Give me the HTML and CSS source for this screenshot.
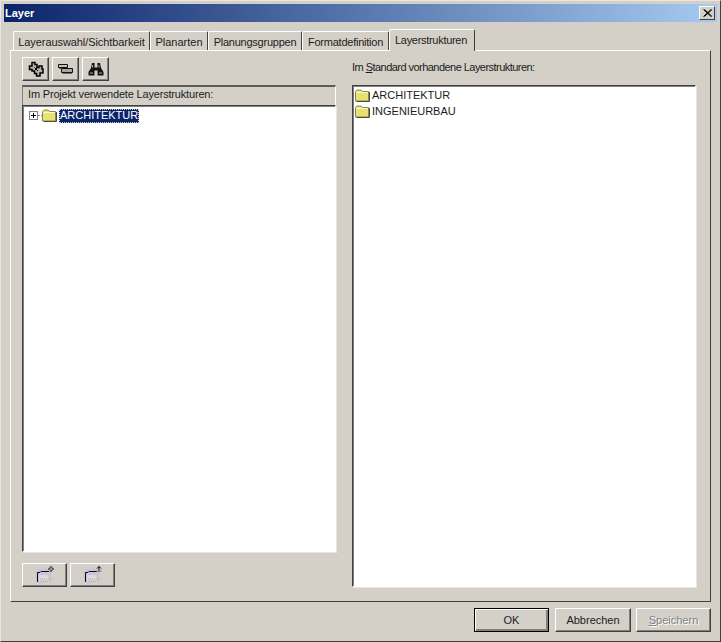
FILE: index.html
```html
<!DOCTYPE html>
<html lang="de">
<head>
<meta charset="utf-8">
<title>Layer</title>
<link rel="stylesheet" href="styles.css">
</head>
<body>
<svg class="defs" width="0" height="0" aria-hidden="true">
  <defs>
    <symbol id="folder" viewBox="0 0 15 13">
      <path d="M0.500 12V2.500L2 1H6L7.500 2.500H13.500V12Z" fill="#e8e272" stroke="#85855a"/>
      <path d="M1 3.500H13" stroke="#fffbc0" fill="none"/>
      <path d="M14.500 3V12.500H1.500" fill="none" stroke="#4e4e30"/>
    </symbol>
    <symbol id="newfolder-a" viewBox="0 0 22 20">
      <path d="M2 6L5 4H13L17 7V15L10 18H4L2 16Z" fill="#c6c4d6"/>
      <path d="M5 10H14L16 16H5Z" fill="#dddbd6"/>
      <path d="M3.500 17V7.500H6L7 6.500H15" fill="none" stroke="#06062a"/>
      <path d="M17 1V7M14 4H20" stroke="#000"/>
      <path d="M15 2L19 6M19 2L15 6" stroke="#8a8a8a"/>
      <path d="M6 14H19M7 16H17" stroke="#aaa8a4" stroke-dasharray="1 1"/>
    </symbol>
    <symbol id="newfolder-b" viewBox="0 0 22 20">
      <path d="M2 6L5 4H13L17 7V15L10 18H4L2 16Z" fill="#c6c4d6"/>
      <path d="M5 10H14L16 16H5Z" fill="#dddbd6"/>
      <path d="M3.500 17V7.500H6L7 6.500H15" fill="none" stroke="#06062a"/>
      <path d="M17 1.500V7M15 3.500L17 1.500L19 3.500" fill="none" stroke="#000"/>
      <path d="M14 6L20 6" stroke="#8a8a8a"/>
      <path d="M6 14H19M7 16H17" stroke="#aaa8a4" stroke-dasharray="1 1"/>
    </symbol>
  </defs>
</svg>
<div class="window">
  <header class="titlebar">
    <span class="title">Layer</span>
    <span class="close">
      <svg width="9" height="8" viewBox="0 0 9 8"><path d="M0.500 0.500L8 7.500M1.500 0.500L9 7.500M8 0.500L0.500 7.500M9 0.500L1.500 7.500" stroke="#000" fill="none"/></svg>
    </span>
  </header>
  <div class="body">
    <nav class="tabs">
      <span class="tab tab-a">Layerauswahl/Sichtbarkeit</span>
      <span class="tab tab-b">Planarten</span>
      <span class="tab tab-c">Planungsgruppen</span>
      <span class="tab tab-d">Formatdefinition</span>
      <span class="tab tab-active">Layerstrukturen</span>
    </nav>
    <section class="panel">
      <div class="col-left">
        <div class="toolbar">
          <span class="btn btn-tool">
            <svg width="16" height="16" viewBox="0 0 16 16"><path d="M4 1.500H7V3.500H9V6.500H11V5H14V8H15V12H12V15H8.500V12.500H6.500V10H4V8.500H1.500V5H4Z" fill="#b4b1a8" stroke="#000" stroke-width="1.500"/><path d="M6.500 6.500L10 10M10 6L7 9" stroke="#000"/></svg>
          </span>
          <span class="btn btn-tool">
            <svg width="15" height="10" viewBox="0 0 15 10"><path d="M0.500 0.500H9.500V3.500H0.500Z" fill="#c8c6a8" stroke="#111"/><path d="M3.500 4.500H14.500V8.500H3.500Z" fill="#a8a698" stroke="#111"/><path d="M1 4.500H3M4.500 9.500H14" stroke="#666"/></svg>
          </span>
          <span class="btn btn-tool">
            <svg width="16" height="13" viewBox="0 0 16 13"><path d="M4 0H6.500V4.500H9.500V0H12L13 5L15.500 9V12.500H9.500V7.500H6.500V12.500H0.500V9L3 5Z" fill="#111"/><path d="M2 10H5M11 10H14M4.500 2V4.500M11 2V4.500" stroke="#aaa"/></svg>
          </span>
        </div>
        <div class="tree-head">Im Projekt verwendete Layerstrukturen:</div>
        <div class="tree sunken">
          <div class="tree-row">
            <span class="expander">
              <svg width="9" height="9" viewBox="0 0 9 9"><rect x=".5" y=".5" width="8" height="8" fill="#fff" stroke="#808080"/><path d="M2 4.500H7M4.500 2V7" stroke="#000"/></svg>
            </span>
            <span class="dots"></span>
            <svg class="icon-folder" width="15" height="13"><use href="#folder"/></svg>
            <span class="selected">ARCHITEKTUR</span>
          </div>
        </div>
        <div class="bottom-tools">
          <span class="btn btn-wide"><svg width="22" height="20"><use href="#newfolder-a"/></svg></span>
          <span class="btn btn-wide"><svg width="22" height="20"><use href="#newfolder-b"/></svg></span>
        </div>
      </div>
      <div class="col-right">
        <div class="list-label">Im <u>S</u>tandard vorhandene Layerstrukturen:</div>
        <div class="list sunken">
          <div class="list-row"><svg width="15" height="13"><use href="#folder"/></svg><span>ARCHITEKTUR</span></div>
          <div class="list-row"><svg width="15" height="13"><use href="#folder"/></svg><span>INGENIEURBAU</span></div>
        </div>
      </div>
    </section>
    <footer class="actions">
      <span class="btn btn-action btn-default">OK</span>
      <span class="btn btn-action">Abbrechen</span>
      <span class="btn btn-action btn-disabled"><span><u>S</u>peichern</span></span>
    </footer>
  </div>
</div>
</body>
</html>
```
FILE: styles.css
```css
* { box-sizing: border-box; }
html, body { margin: 0; padding: 0; }
body {
  width: 721px;
  height: 642px;
  overflow: hidden;
  background: #d4d0c8;
  font-family: "Liberation Sans", Arial, sans-serif;
  font-size: 11px;
  color: #1c1c1c;
}
.defs { position: absolute; }
.window {
  width: 721px;
  height: 642px;
  display: flex;
  flex-direction: column;
  background: #d4d0c8;
  border: 1px solid;
  border-color: #e8e6e0 #404040 #404040 #e8e6e0;
  padding: 3px;
}
.titlebar {
  height: 18px;
  flex: none;
  display: flex;
  align-items: center;
  justify-content: space-between;
  padding: 0 2px 0 1px;
  background: linear-gradient(90deg, #0a246a, #a6caf0);
  color: #fff;
}
.title { font-weight: bold; font-size: 11px; }
.close {
  width: 16px;
  height: 14px;
  display: flex;
  align-items: center;
  justify-content: center;
  background: #d4d0c8;
  border: 1px solid;
  border-color: #fff #404040 #404040 #fff;
}
.body {
  flex: 1;
  display: flex;
  flex-direction: column;
  padding: 7px 6px 6px 6px;
  min-height: 0;
}
.tabs {
  height: 21px;
  flex: none;
  display: flex;
  align-items: flex-end;
  padding-left: 3px;
  position: relative;
  z-index: 1;
}
.tab {
  height: 19px;
  display: flex;
  align-items: center;
  justify-content: center;
  border: 1px solid #fff;
  border-bottom: 0;
  border-right-color: #404040;
  border-radius: 2px 2px 0 0;
  white-space: nowrap;
  padding-top: 1px;
  letter-spacing: -0.24px;
}
.tab-a { width: 137px; letter-spacing: -0.08px; }
.tab-b { width: 58px; letter-spacing: 0; }
.tab-c { width: 94px; }
.tab-d { width: 87px; }
.tab-active {
  width: 86px;
  height: 22px;
  margin-bottom: -1px;
  padding-bottom: 2px;
  padding-right: 2px;
  letter-spacing: -0.3px;
  background: #d4d0c8;
}
.panel {
  flex: 1;
  min-height: 0;
  display: flex;
  padding: 6px 14px 14px 11px;
  gap: 16px;
  border: 1px solid;
  border-color: #fff #404040 #404040 #fff;
}
.col-left {
  width: 314px;
  flex: none;
  display: flex;
  flex-direction: column;
}
.col-right {
  flex: 1;
  min-width: 0;
  display: flex;
  flex-direction: column;
}
.toolbar {
  display: flex;
  gap: 3px;
  height: 24px;
  margin-bottom: 4px;
  flex: none;
}
.btn {
  display: flex;
  align-items: center;
  justify-content: center;
  background: #d4d0c8;
  border: 1px solid;
  border-color: #fff #404040 #404040 #fff;
  box-shadow: inset -1px -1px 0 #808080;
}
.btn-tool { width: 27px; height: 24px; }
.tree-head {
  height: 20px;
  flex: none;
  line-height: 14px;
  padding-left: 5px;
  border-top: 2px solid #5c5c5c;
  border-left: 1px solid #808080;
  border-right: 1px solid #fff;
  letter-spacing: -0.18px;
}
.sunken {
  background: #fff;
  border: 1px solid;
  border-color: #404040 #fff #fff #404040;
  box-shadow: inset 1px 1px 0 #808080, 1px 1px 0 #e8e6e0;
}
.tree {
  flex: 1;
  min-height: 0;
  padding: 2px 0 0 6px;
}
.tree-row {
  display: flex;
  align-items: center;
  height: 15px;
}
.expander { display: flex; width: 9px; height: 9px; }
.dots {
  width: 4px;
  height: 0;
  border-top: 1px dotted #808080;
}
.icon-folder { flex: none; margin-right: 2px; }
.selected {
  height: 14px;
  line-height: 13px;
  padding: 0 1px;
  background: #0a246a;
  color: #fff;
  outline: 1px dotted #d4d0c8;
  outline-offset: -1px;
}
.bottom-tools {
  display: flex;
  gap: 3px;
  height: 24px;
  margin-top: 11px;
  flex: none;
}
.btn-wide { width: 45px; height: 24px; }
.list-label {
  height: 28px;
  flex: none;
  padding-top: 4px;
  line-height: 13px;
  letter-spacing: -0.54px;
}
.list {
  flex: 1;
  min-height: 0;
  padding: 1px 0 0 2px;
}
.list-row {
  display: flex;
  align-items: center;
  gap: 2px;
  height: 16px;
}
.actions {
  flex: none;
  height: 24px;
  margin-top: 6px;
  display: flex;
  justify-content: flex-end;
  gap: 5px;
}
.btn-action { width: 76px; height: 24px; }
.btn-default {
  outline: 1px solid #000;
  outline-offset: -1px;
  width: 75px;
  margin-right: 1px;
  box-shadow: inset 1px 1px 0 #fff, inset -2px -2px 0 #808080;
}
.btn-disabled { width: 75px; color: #808080; text-shadow: 1px 1px 0 #fff; }
```
